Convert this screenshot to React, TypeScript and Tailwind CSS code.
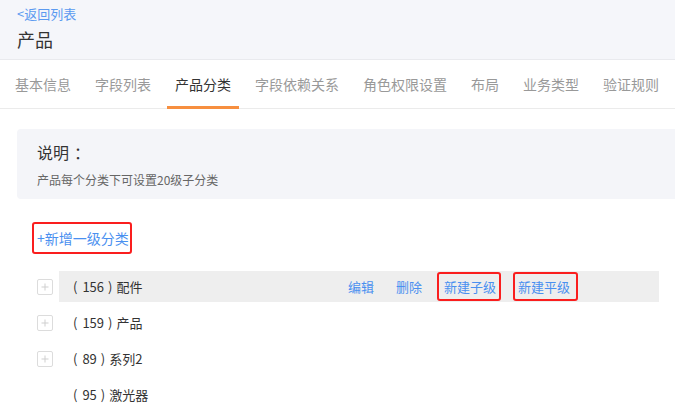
import React from "react";

const font = { fontFamily: '"Noto Sans CJK SC", "Noto Sans", sans-serif' };

const tabs = ["基本信息", "字段列表", "产品分类", "字段依赖关系", "角色权限设置", "布局", "业务类型", "验证规则"];

function PlusBox() {
  return (
    <div className="w-4 h-4 border border-[#dcdcdc] rounded-[2px] flex items-center justify-center bg-white">
      <svg width="10" height="10" viewBox="0 0 10 10">
        <path d="M5 1.5V8.5M1.5 5H8.5" stroke="#cfcfcf" strokeWidth="1" />
      </svg>
    </div>
  );
}

const rows = [
  { num: "156", name: "配件", plus: true, active: true },
  { num: "159", name: "产品", plus: true },
  { num: "89", name: "系列2", plus: true },
  { num: "95", name: "激光器", plus: false },
];

export default function App() {
  return (
    <div className="w-[675px] h-[408px] overflow-hidden bg-white" style={font}>
      <div className="h-[60px] bg-[#f5f6fa] border-b border-[#e9eaee] pl-[17px] pt-[5px]">
        <div className="text-[13px] leading-[18px] text-[#5b9af0]">&lt;返回列表</div>
        <div className="text-[18px] leading-[26px] text-[#333] mt-[3px]">产品</div>
      </div>
      <div className="h-[49px] border-b border-[#ebebeb] flex pl-[7px] gap-2">
        {tabs.map((t) => (
          <div
            key={t}
            className={
              t === "产品分类"
                ? "px-2 h-[49px] flex items-center text-[14px] text-[#333] border-b-[3px] border-[#f78f3f] pt-[3px]"
                : "px-2 h-[49px] flex items-center text-[14px] text-[#999] border-b-[3px] border-transparent pt-[3px]"
            }
          >
            {t}
          </div>
        ))}
      </div>
      <div className="ml-[17px] mt-[20px] h-[70px] bg-[#f4f5f9] rounded-l-[4px] pl-[20px] pt-[12px]">
        <div className="text-[16px] leading-[22px] text-[#333] flex">
          <span>说明</span>
          <span className="ml-[5px]">：</span>
        </div>
        <div className="text-[12px] leading-[18px] text-[#666] mt-[8px]">产品每个分类下可设置20级子分类</div>
      </div>
      <div className="ml-[32px] mt-[23px] w-[100px] h-[32px] border-2 border-[#fa1e1e] rounded-[3px] flex items-center pl-[3px] text-[14px] text-[#4a90f0]">
        +新增一级分类
      </div>
      <div className="mt-[17px] pl-[37px]">
        {rows.map((r) => (
          <div key={r.num} className="flex items-center h-[31px] mb-[5px]">
            <div className="w-4 mr-[6px]">{r.plus ? <PlusBox /> : null}</div>
            <div
              className={
                r.active
                  ? "w-[600px] h-[31px] bg-[#eeeeee] flex items-center pl-[14px] text-[13px] text-[#333]"
                  : "w-[600px] h-[31px] flex items-center pl-[14px] text-[13px] text-[#333]"
              }
            >
              <span className="w-[275px] flex">
                <span>(</span>
                <span className="ml-[5px]">{r.num}</span>
                <span className="ml-[4px]">)</span>
                <span className="ml-[4px]">{r.name}</span>
              </span>
              {r.active ? (
                <div className="flex items-center text-[#4a90f0] text-[13px]">
                  <span>编辑</span>
                  <span className="ml-[22px]">删除</span>
                  <span className="ml-[15px] h-[29px] border-2 border-[#fa1e1e] rounded-[3px] flex items-center pl-[5px] pr-[3px]">新建子级</span>
                  <span className="ml-[12px] h-[29px] border-2 border-[#fa1e1e] rounded-[3px] flex items-center pl-[3px] pr-[6px]">新建平级</span>
                </div>
              ) : null}
            </div>
          </div>
        ))}
      </div>
    </div>
  );
}
